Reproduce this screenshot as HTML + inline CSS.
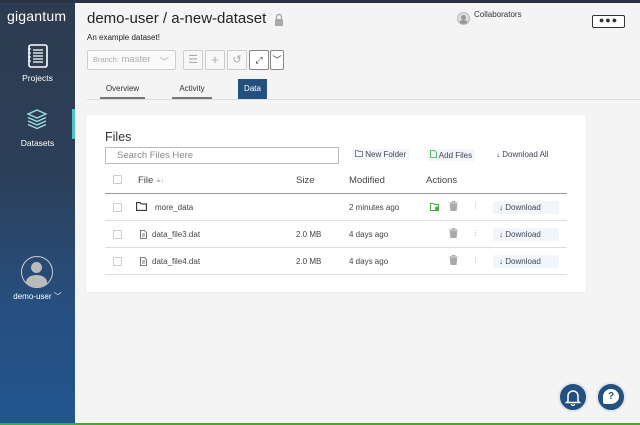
<!DOCTYPE html>
<html><head><meta charset="utf-8"><style>
*{box-sizing:border-box;margin:0;padding:0}
body{width:640px;height:425px;overflow:hidden;background:#f4f4f5;font-family:"Liberation Sans",sans-serif;color:#333;position:relative}
.a{position:absolute}
.side{left:0;top:0;width:75px;height:425px;background:linear-gradient(#2d3c50 0%,#2c3f58 40%,#265082 75%,#22558f 100%)}
.topbar{left:0;top:0;width:640px;height:3px;background:#2b3444}
.green{left:0;top:423px;width:640px;height:2px;background:#3fae2a}
.w{color:#fff;font-size:8.5px;text-align:center}
.btn{border:1px solid #ccc;background:#f7f7f7;border-radius:2px}
.tab{font-size:8px;color:#333;text-align:center}
.hd{font-size:9.5px;color:#444}
.r{font-size:8px;color:#444}
.line{height:1px;background:#ddd;left:105px;width:462px}
.cb{width:9px;height:9px;border:1px solid #ccc;border-radius:1px;background:#fff}
.dl{background:#f2f5f9;font-size:8px;color:#445;padding:2px 6px;border-radius:2px}
.trash{width:9px;height:10px}
</style></head><body>
<div class="a side"></div>
<div class="a topbar"></div>
<div class="a" style="left:7px;top:8px;color:#fff;font-size:14px;letter-spacing:0.2px">gigantum</div>
<svg class="a" style="left:27px;top:44px" width="22" height="24" viewBox="0 0 22 24"><rect x="2" y="1" width="18" height="22" rx="2" fill="none" stroke="#fff" stroke-width="1.6"/><path d="M6 6h10M6 9h10M6 12h10M6 15h10M6 18h10" stroke="#fff" stroke-width="1.2"/><path d="M1 5h3M1 9h3M1 13h3M1 17h3" stroke="#fff" stroke-width="1"/></svg>
<div class="a w" style="left:0;top:73px;width:75px">Projects</div>
<svg class="a" style="left:26px;top:108px" width="22" height="22" viewBox="0 0 22 22"><path d="M11 2 20 6 11 10 2 6Z" fill="none" stroke="#9fe0e0" stroke-width="1.3"/><path d="M2 9.5 11 13.5 20 9.5M2 13 11 17 20 13M2 16.5 11 20.5 20 16.5" fill="none" stroke="#9fe0e0" stroke-width="1.3"/></svg>
<div class="a w" style="left:0;top:138px;width:75px">Datasets</div>
<div class="a" style="left:72px;top:109px;width:3px;height:30px;background:#4fc3c0"></div>
<div class="a" style="left:21px;top:256px;width:32px;height:32px;border-radius:50%;border:1.5px solid #ccc;overflow:hidden"><div class="a" style="left:9px;top:5px;width:11px;height:11px;border-radius:50%;background:#bbb"></div><div class="a" style="left:4px;top:18px;width:21px;height:14px;border-radius:50% 50% 0 0;background:#bbb"></div></div>
<div class="a w" style="left:0;top:291px;width:75px;font-size:8px">demo-user ﹀</div>

<div class="a" style="left:87px;top:10px;font-size:15px;color:#222">demo-user / a-new-dataset</div>
<svg class="a" style="left:274px;top:13px" width="10" height="13" viewBox="0 0 10 13"><path d="M2.5 6V4a2.5 2.5 0 0 1 5 0v2" fill="none" stroke="#aaa" stroke-width="1.5"/><rect x="1" y="6" width="8" height="7" rx="1" fill="#aaa"/></svg>
<div class="a" style="left:87px;top:33px;font-size:8px;color:#222">An example dataset!</div>
<div class="a btn" style="left:87px;top:50px;width:89px;height:20px;font-size:9.5px;color:#aaa;padding:3px 5px;background:#fafafa"><span style="font-size:7.5px">Branch:</span> master <span style="position:absolute;right:6px;top:3px">﹀</span></div>
<div class="a btn" style="left:183px;top:50px;width:20px;height:20px;color:#aaa;font-size:11px;text-align:center;line-height:18px">☰</div>
<div class="a btn" style="left:205px;top:50px;width:20px;height:20px;color:#aaa;font-size:13px;text-align:center;line-height:17px">+</div>
<div class="a btn" style="left:227px;top:50px;width:20px;height:20px;color:#aaa;font-size:11px;text-align:center;line-height:18px">↺</div>
<div class="a btn" style="left:249px;top:50px;width:20px;height:20px;border-color:#888;background:#fff;font-size:9px;text-align:center;line-height:18px;color:#333">⤢</div>
<div class="a btn" style="left:270px;top:50px;width:14px;height:20px;border-color:#888;background:#fff;font-size:9px;text-align:center;line-height:18px;color:#333">﹀</div>
<div class="a tab" style="left:100px;top:84px;width:45px">Overview</div>
<div class="a" style="left:100px;top:97px;width:45px;height:2px;background:#777"></div>
<div class="a tab" style="left:172px;top:84px;width:40px">Activity</div>
<div class="a" style="left:172px;top:97px;width:40px;height:2px;background:#777"></div>
<div class="a tab" style="left:238px;top:79px;width:29px;height:20px;background:#24507f;color:#fff;line-height:20px">Data</div>
<div class="a" style="left:87px;top:99px;width:553px;height:1px;background:#ddd"></div>

<div class="a" style="left:457px;top:12px;width:13px;height:13px;border-radius:50%;background:#ddd;border:1px solid #bbb;overflow:hidden"><div class="a" style="left:3px;top:2px;width:5px;height:5px;border-radius:50%;background:#999"></div><div class="a" style="left:1px;top:7px;width:9px;height:4px;border-radius:4px 4px 0 0;background:#999"></div></div>
<div class="a" style="left:474px;top:10px;font-size:8px;color:#333">Collaborators</div>
<div class="a" style="left:592px;top:15px;width:33px;height:13px;border:1.5px solid #333;border-radius:2px;background:#fff;font-size:9px;text-align:center;line-height:8px;letter-spacing:1px;color:#333;font-weight:bold">●●●</div>

<div class="a" style="left:86px;top:115px;width:500px;height:177px;background:#fff;box-shadow:0 0 2px rgba(0,0,0,.08)"></div>
<div class="a" style="left:105px;top:130px;font-size:12.5px;color:#333">Files</div>
<div class="a" style="left:105px;top:147px;width:234px;height:17px;border:1px solid #bbb;font-size:9.5px;color:#888;padding:2px 11px">Search Files Here</div>
<div class="a" style="left:352px;top:149px;font-size:8px;color:#445;background:#f2f5f9;padding:1px 3px"><svg width="8" height="7" viewBox="0 0 8 7"><path d="M.5.5h2.5l.8 1h3.7v5H.5Z" fill="none" stroke="#667" stroke-width=".8"/></svg> New Folder</div>
<div class="a" style="left:427px;top:149px;font-size:8px;color:#445;background:#f2f5f9;padding:1px 3px"><svg width="7" height="8" viewBox="0 0 7 8"><path d="M.5.5h4l2 2v5H.5Z" fill="none" stroke="#4a4" stroke-width=".8"/></svg> Add Files</div>
<div class="a" style="left:496px;top:150px;font-size:8px;color:#445">↓ Download All</div>

<div class="a cb" style="left:113px;top:175px"></div>
<div class="a hd" style="left:138px;top:175px">File <span style="font-size:6px;color:#888">≟↑</span></div>
<div class="a hd" style="left:296px;top:175px">Size</div>
<div class="a hd" style="left:349px;top:175px">Modified</div>
<div class="a hd" style="left:426px;top:175px">Actions</div>
<div class="a line" style="top:193px;background:#999"></div>

<div class="a cb" style="left:113px;top:203px"></div>
<svg class="a" style="left:136px;top:202px" width="11" height="9" viewBox="0 0 11 9"><path d="M.6.6h3.5l1 1.3h5.3v6.5H.6Z" fill="none" stroke="#333" stroke-width="1.1"/></svg>
<div class="a r" style="left:155px;top:203px">more_data</div>
<div class="a r" style="left:349px;top:203px">2 minutes ago</div>
<svg class="a" style="left:430px;top:203px" width="10" height="8" viewBox="0 0 10 8"><path d="M.5.5h3l1 1h4v6H.5Z" fill="none" stroke="#4a4" stroke-width=".9"/><circle cx="7" cy="5.5" r="2" fill="#4a4"/></svg>
<div class="a line" style="top:220px"></div>

<div class="a cb" style="left:113px;top:230px"></div>
<svg class="a" style="left:140px;top:230px" width="7" height="9" viewBox="0 0 7 9"><path d="M.5.5h4l2 2v6H.5Z" fill="none" stroke="#555" stroke-width=".8"/><path d="M2 4h3M2 6h3" stroke="#555" stroke-width=".7"/></svg>
<div class="a r" style="left:152px;top:230px">data_file3.dat</div>
<div class="a r" style="left:296px;top:230px">2.0 MB</div>
<div class="a r" style="left:349px;top:230px">4 days ago</div>
<div class="a line" style="top:247px"></div>

<div class="a cb" style="left:113px;top:257px"></div>
<svg class="a" style="left:140px;top:257px" width="7" height="9" viewBox="0 0 7 9"><path d="M.5.5h4l2 2v6H.5Z" fill="none" stroke="#555" stroke-width=".8"/><path d="M2 4h3M2 6h3" stroke="#555" stroke-width=".7"/></svg>
<div class="a r" style="left:152px;top:257px">data_file4.dat</div>
<div class="a r" style="left:296px;top:257px">2.0 MB</div>
<div class="a r" style="left:349px;top:257px">4 days ago</div>
<div class="a line" style="top:274px"></div>

<svg class="a trash" style="left:449px;top:201px" viewBox="0 0 9 10"><path d="M0 1.5h9M3 1.5V.3h3v1.2M1 2.5h7L7.3 10H1.7Z" fill="#aaa" stroke="#aaa" stroke-width=".6"/></svg>
<svg class="a trash" style="left:449px;top:228px" viewBox="0 0 9 10"><path d="M0 1.5h9M3 1.5V.3h3v1.2M1 2.5h7L7.3 10H1.7Z" fill="#aaa" stroke="#aaa" stroke-width=".6"/></svg>
<svg class="a trash" style="left:449px;top:255px" viewBox="0 0 9 10"><path d="M0 1.5h9M3 1.5V.3h3v1.2M1 2.5h7L7.3 10H1.7Z" fill="#aaa" stroke="#aaa" stroke-width=".6"/></svg>
<div class="a" style="left:472px;top:202px;font-size:7px;color:#aaa">⋮</div>
<div class="a" style="left:472px;top:229px;font-size:7px;color:#aaa">⋮</div>
<div class="a" style="left:472px;top:256px;font-size:7px;color:#aaa">⋮</div>
<div class="a dl" style="left:493px;top:201px;width:66px">↓ Download</div>
<div class="a dl" style="left:493px;top:228px;width:66px">↓ Download</div>
<div class="a dl" style="left:493px;top:255px;width:66px">↓ Download</div>

<div class="a" style="left:558px;top:382px;width:30px;height:30px;border-radius:50%;background:#24507f;border:2px solid #dfe6ee"></div>
<svg class="a" style="left:565px;top:388px" width="16" height="18" viewBox="0 0 16 18"><path d="M3 13V8a5 5 0 0 1 10 0v5l1.5 1.5h-13Z" fill="none" stroke="#fff" stroke-width="1.5"/><path d="M6.5 16a1.5 1.5 0 0 0 3 0" fill="none" stroke="#fff" stroke-width="1.3"/></svg>
<div class="a" style="left:596px;top:382px;width:30px;height:30px;border-radius:50%;background:#24507f;border:2px solid #dfe6ee"></div>
<div class="a" style="left:603px;top:389px;width:16px;height:15px;border-radius:50% 50% 50% 2px;background:#fff;color:#24507f;font-size:10px;font-weight:bold;text-align:center;line-height:15px">?</div>
<div class="a green"></div>
</body></html>
